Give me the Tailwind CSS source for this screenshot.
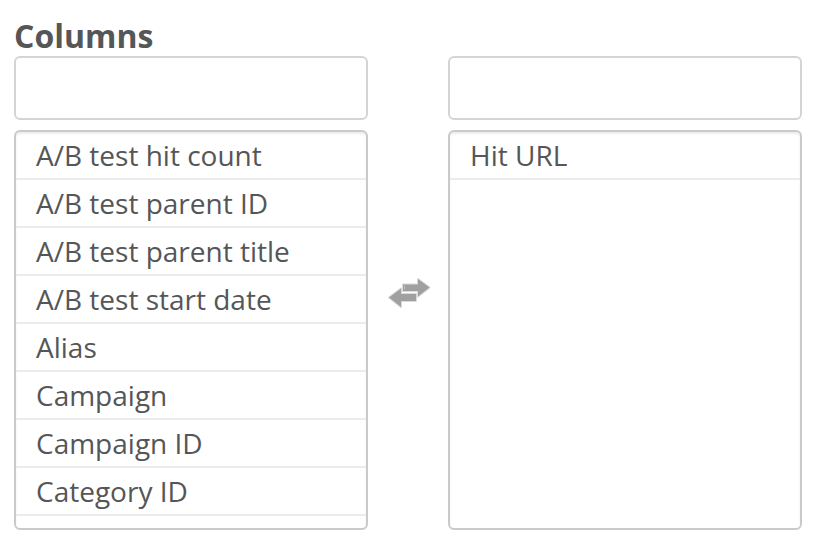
<!DOCTYPE html>
<html lang="en">
<head>
    <meta charset="UTF-8">
    <meta name="viewport" content="width=device-width, initial-scale=1.0">
    <title>Columns</title>
    <script src="https://cdn.jsdelivr.net/npm/@tailwindcss/browser@4"></script>
</head>
<body class="bg-white font-['Open_Sans',sans-serif] text-[#555657]">
    <div class="pt-4 pr-4 pb-4 pl-[14px]">
        <h2 id="columnsTitle" class="text-[32px] leading-10 font-bold">Columns</h2>
        <div class="flex" role="group" aria-labelledby="columnsTitle">
            <!-- Available columns -->
            <div class="min-w-0 flex-1">
                <input type="text" id="availableSearch" aria-label="Search available columns" class="block h-16 w-full rounded-md border-2 border-[#d4d4d4] bg-white px-5 text-[28px] outline-none">
                <ul id="available" aria-label="Available columns" class="mt-[10px] h-[400px] overflow-hidden rounded-md border-2 border-[#cacaca] text-[28px] leading-[46px] inset-shadow-[0_2px_2px_#ececec]">
                    <li class="cursor-pointer border-b-2 border-[#ececec] px-5">A/B test hit count</li>
                    <li class="cursor-pointer border-b-2 border-[#ececec] px-5">A/B test parent ID</li>
                    <li class="cursor-pointer border-b-2 border-[#ececec] px-5">A/B test parent title</li>
                    <li class="cursor-pointer border-b-2 border-[#ececec] px-5">A/B test start date</li>
                    <li class="cursor-pointer border-b-2 border-[#ececec] px-5">Alias</li>
                    <li class="cursor-pointer border-b-2 border-[#ececec] px-5">Campaign</li>
                    <li class="cursor-pointer border-b-2 border-[#ececec] px-5">Campaign ID</li>
                    <li class="cursor-pointer border-b-2 border-[#ececec] px-5">Category ID</li>
                </ul>
            </div>

            <div class="flex w-20 shrink-0 items-center justify-center">
                <svg class="h-8 w-12" viewBox="0 0 48 32" fill="#a0a0a0" stroke="#dadada" stroke-width="2" stroke-linejoin="round" paint-order="stroke" aria-hidden="true">
                    <path d="M19 7.5H34V2L45.500 10.500L34 19.500V14H19Z"/>
                    <path d="M32 24H17V30L5 20.500L17 11.500V17H32Z"/>
                    <path d="M20.500 9V12" stroke="#c4c4c4" stroke-width="1"/>
                </svg>
            </div>

            <!-- Selected columns -->
            <div class="min-w-0 flex-1">
                <input type="text" id="selectedSearch" aria-label="Search selected columns" class="block h-16 w-full rounded-md border-2 border-[#d4d4d4] bg-white px-5 text-[28px] outline-none">
                <ul id="selected" aria-label="Selected columns" class="mt-[10px] h-[400px] overflow-hidden rounded-md border-2 border-[#cacaca] text-[28px] leading-[46px] inset-shadow-[0_2px_2px_#ececec]">
                    <li class="cursor-pointer border-b-2 border-[#ececec] px-5">Hit URL</li>
                </ul>
            </div>
        </div>
    </div>
</body>
</html>
